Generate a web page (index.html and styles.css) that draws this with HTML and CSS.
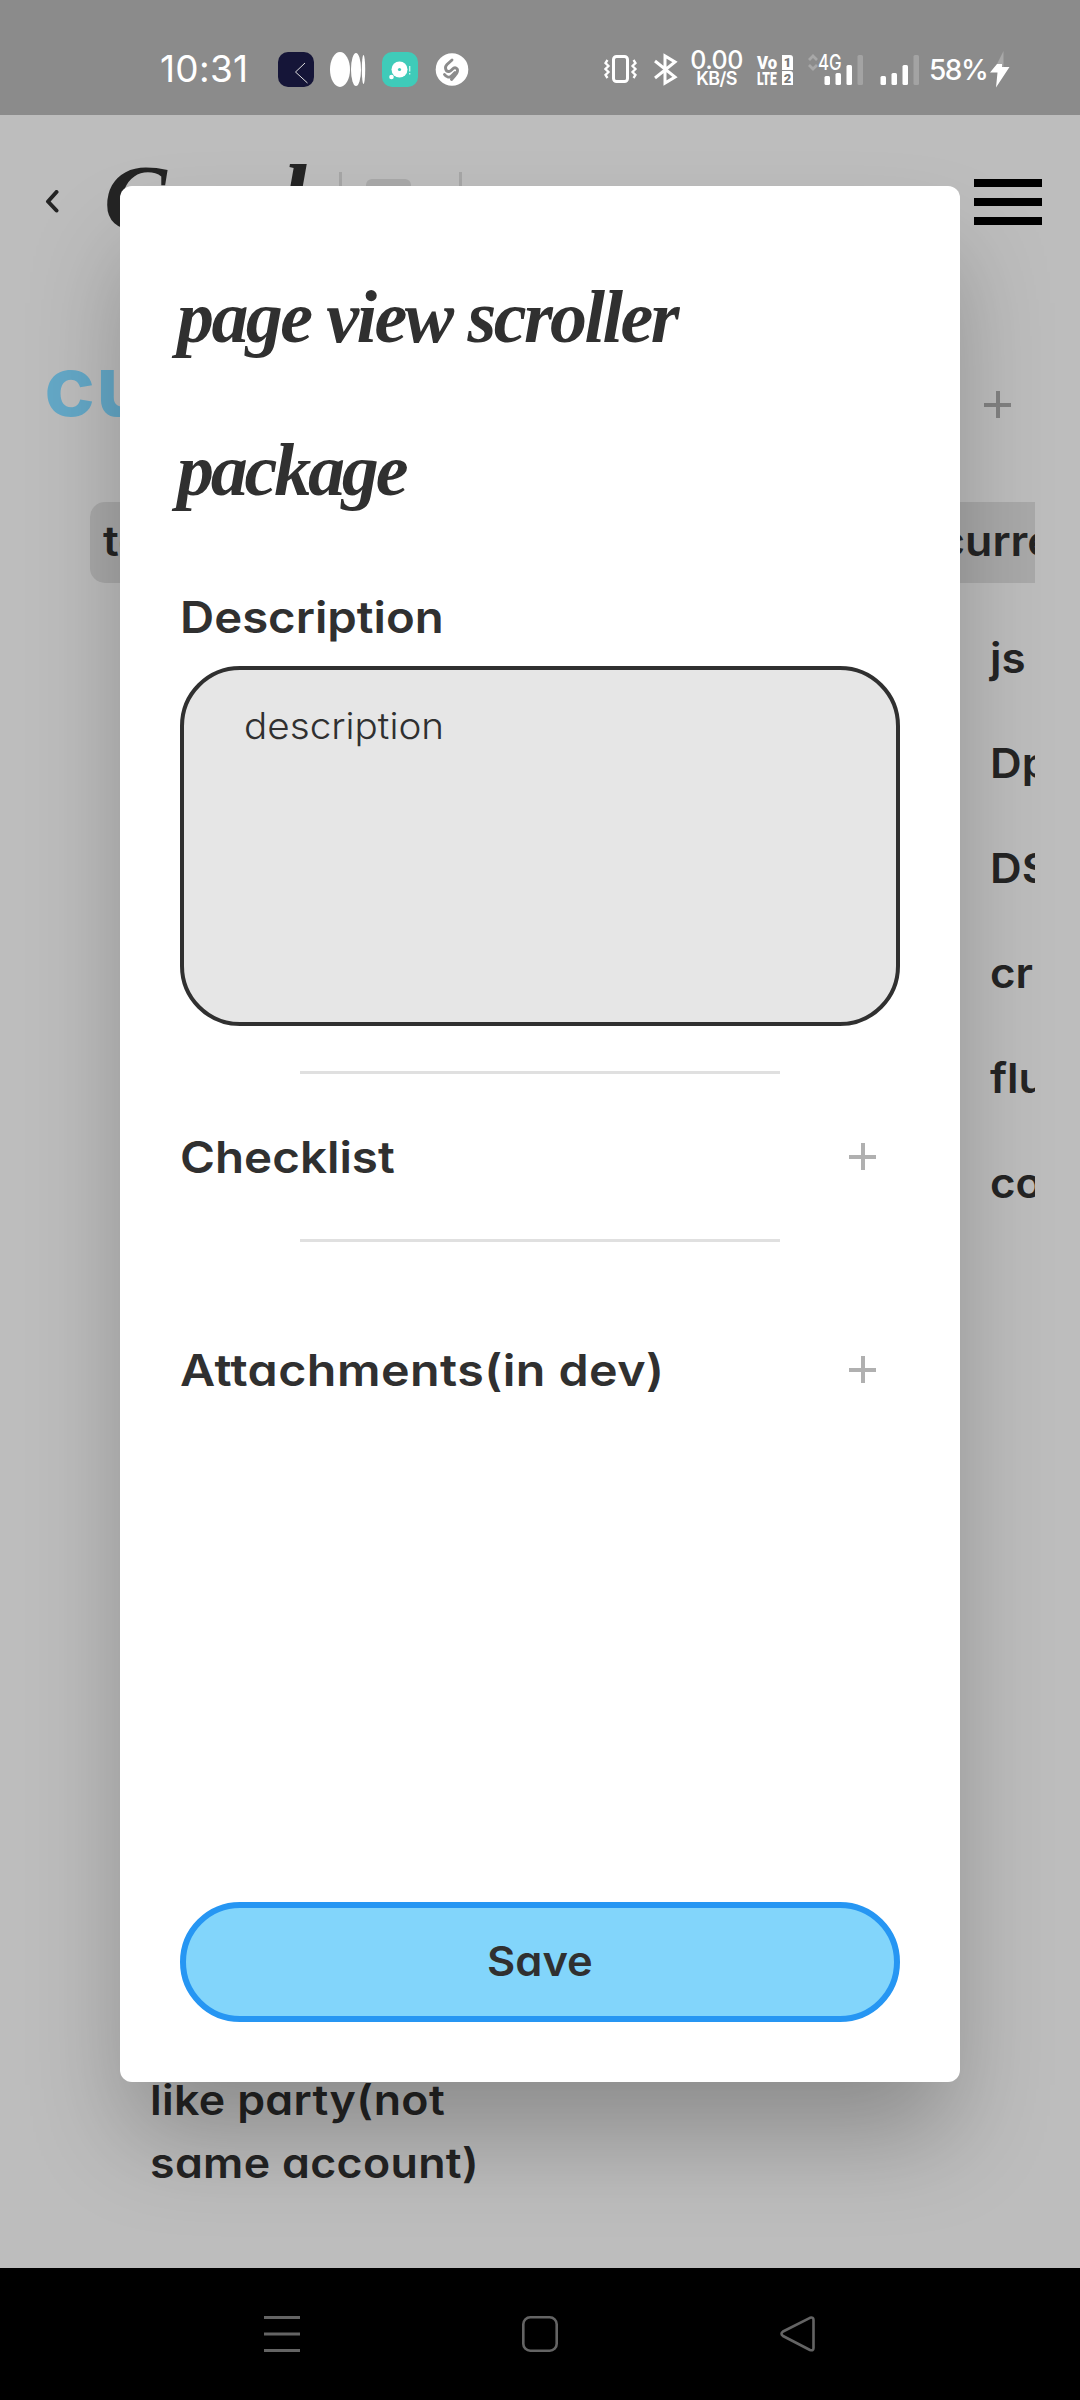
FILE: index.html
```html
<!DOCTYPE html>
<html lang="en">
<head>
<meta charset="utf-8">
<title>Card details</title>
<link rel="stylesheet" href="styles.css">
</head>
<body>
<header class="status">
  <span class="clock">10:31</span>
  <svg class="notif" width="192" height="38" viewBox="278 51 192 38">
    <rect x="278" y="52" width="36" height="35" rx="10" fill="#151538"/>
    <path d="M305 63L295.500 72L307.500 83" fill="none" stroke="#ddd" stroke-width="1"/>
    <g fill="#fff"><ellipse cx="340" cy="69.500" rx="10" ry="17.500"/><ellipse cx="356" cy="69.500" rx="5" ry="16.500"/><ellipse cx="363.500" cy="69.500" rx="1.700" ry="14.500"/></g>
    <rect x="382" y="52" width="36" height="35" rx="10" fill="#3fcbb9"/>
    <circle cx="399.500" cy="69.500" r="8" fill="#fff"/><circle cx="399.500" cy="69.500" r="1.600" fill="#3fcbb9"/><circle cx="391.500" cy="77" r="2.300" fill="#fff"/>
    <path d="M409.700 66v5.500m0 1.500v1.500" stroke="#d8f5f1" stroke-width="1.300"/>
    <circle cx="452" cy="69.500" r="16.300" fill="#fff"/>
    <path d="M452 60l-5 4.500c-3 3-1 7.500 2 7s4-5 7-3.500 1 5.500-1 7.500l-3.500 4M444.500 74.500c2 3 5 3.500 7.500 1l3-3" fill="none" stroke="#8b8b8b" stroke-width="2.900" stroke-linecap="round"/>
  </svg>
  <svg class="radios" width="74" height="38" viewBox="604 51 74 38" fill="none" stroke="#fff">
    <rect x="613.500" y="56.500" width="14" height="25" rx="3" stroke-width="3"/>
    <path d="M607.500 60l-2 3 3 3-3 3 3 3-3 3 2 3M633.500 60l2 3-3 3 3 3-3 3 3 3-2 3" stroke-width="2.300"/>
    <path d="M655 61l20 16-10 6V56l10 6-20 16" stroke-width="3"/>
  </svg>
  <div class="speed"><span class="speed-value">0.00</span><span class="speed-unit">KB/S</span></div>
  <div class="volte">
    <span>Vo</span><b>1</b><span class="lte">LTE</span><b>2</b>
  </div>
  <svg class="arrows" width="10" height="18" viewBox="0 0 10 18" fill="none" stroke="#a8a8a8" stroke-width="2.800"><path d="M1 6l4-4 4 4M1 11l4 4 4-4"/></svg>
  <div class="signal">
    <span class="net">4G</span>
    <svg width="96" height="30" viewBox="825 54 96 30">
      <g fill="#fff"><rect x="825.500" y="75" width="5.500" height="9" rx="1.500"/><rect x="836.500" y="72" width="5.500" height="12" rx="1.500"/><rect x="847.500" y="64" width="5.500" height="20" rx="1.500"/><rect x="881.500" y="75" width="5.500" height="9" rx="1.500"/><rect x="892.500" y="72" width="5.500" height="12" rx="1.500"/><rect x="903.500" y="64" width="5.500" height="20" rx="1.500"/></g>
      <g fill="#a3a3a3"><rect x="858.500" y="54" width="5.500" height="30" rx="1.500"/><rect x="914.500" y="54" width="5.500" height="30" rx="1.500"/></g>
    </svg>
  </div>
  <span class="battery">58%</span>
  <svg class="bolt" width="20" height="37" viewBox="0 0 20 37"><path d="M13.500 0L7 13l6.500 3z" fill="#a8a8a8"/><path d="M7 13L0 21.500h7.500L6 36.500 19.500 16H12V13z" fill="#fff"/></svg>
</header>

<main class="app">
  <div class="topbar">
    <svg class="back" width="14" height="24" viewBox="0 0 14 24"><path d="M11.500 2L3 11.500l8.500 9" fill="none" stroke="#242424" stroke-width="4" stroke-linecap="round" stroke-linejoin="round"/></svg>
    <div class="brand"><span>C</span><span>l</span></div>
    <i class="rule"></i><i class="box"></i><i class="rule"></i>
    <div class="menu"><i></i><i></i><i></i></div>
  </div>
  <div class="titlebar">
    <h1 class="board-title">cu</h1>
    <i class="plus plus-dark"></i>
  </div>
  <div class="board">
    <section class="column">
      <h2 class="column-name"><span class="wide">to</span></h2>
      <p class="task"><span class="wide">like party(not</span><br><span class="wide">same account)</span></p>
    </section>
    <section class="column column-current">
      <h2 class="column-name"><span class="wide">curre</span></h2>
      <ul class="tasks"><li>js</li><li>Dp</li><li>DS</li><li>cr</li><li>flu</li><li>co</li></ul>
    </section>
  </div>

  <div class="dialog">
    <h2 class="card-title"><span class="line-one">page view scroller</span><br><span class="line-two">package</span></h2>
    <h3 class="label label-description">Description</h3>
    <div class="field"><span>description</span></div>
    <hr class="divider">
    <div class="row row-checklist"><h3 class="label label-checklist">Checklist</h3><i class="plus"></i></div>
    <hr class="divider">
    <div class="row row-attachments"><h3 class="label label-attachments">Attachments(in dev)</h3><i class="plus"></i></div>
    <button class="save"><span>Save</span></button>
  </div>
</main>

<nav class="nav">
  <svg width="36" height="36" viewBox="0 0 36 36" fill="none" stroke="#646464" stroke-width="3"><path d="M0 1.500h36M0 18h36M0 34.500h36"/></svg>
  <svg width="36" height="36" viewBox="0 0 36 36" fill="none" stroke="#646464" stroke-width="2.600"><rect x="1.300" y="1.300" width="33.400" height="33.400" rx="7"/></svg>
  <svg width="36" height="36" viewBox="0 0 36 36" fill="none" stroke="#646464" stroke-width="2.600" stroke-linejoin="round"><path d="M3 15.500L30 1.800Q33.500 .8 33.500 4V32Q33.500 35.200 30 34L3 20Q0 17.700 3 15.500z"/></svg>
</nav>
</body>
</html>
```
FILE: styles.css
```css
* { box-sizing: border-box; margin: 0; padding: 0; }

body {
  width: 1080px;
  height: 2400px;
  display: flex;
  flex-direction: column;
  overflow: hidden;
  background: #000;
  color: #242424;
  font-family: Inter, "Liberation Sans", sans-serif;
  font-feature-settings: "cv11";
}
svg { display: block; flex: none; }
h1, h2, h3 { font-weight: 600; }

/* system status bar */
.status {
  height: 115px;
  padding: 24px 0 0 160px;
  display: flex;
  align-items: center;
  background: #8b8b8b;
  color: #fff;
  white-space: nowrap;
}
.clock { width: 118px; font-size: 37px; line-height: 40px; padding-bottom: 2px; letter-spacing: 0.3px; }
.notif { margin-right: 134px; }
.radios { margin-right: 12px; }
.speed { width: 53px; display: flex; flex-direction: column; align-items: center; }
.speed-value { font-size: 25px; line-height: 19px; font-weight: 500; letter-spacing: -0.5px; }
.speed-unit { font-size: 18px; line-height: 18px; font-weight: 600; letter-spacing: -0.6px; }
.volte {
  width: 36px;
  margin: 0 15px 0 14px;
  display: grid;
  grid-template-columns: 24px 11px;
  grid-template-rows: 15px 14px;
  column-gap: 1px;
  row-gap: 1px;
  font: 900 19px/15px Roboto, sans-serif;
}
.volte span { transform: scaleX(.88); transform-origin: left; }
.volte .lte { transform: scaleX(.64); }
.volte b { background: #fff; color: #777; font-size: 13px; text-align: center; border-radius: 0 3px 0 0; }
.arrows { align-self: flex-start; margin: 30px 6px 0 0; }
.signal { position: relative; width: 96px; margin-right: 9px; }
.net { position: absolute; left: -6px; top: -3px; font-size: 21px; line-height: 21px; font-weight: 500; transform: scaleX(.8); transform-origin: left; }
.battery { width: 61px; font-size: 28px; line-height: 30px; font-weight: 500; letter-spacing: -1.5px; }

/* board behind the dialog */
.app {
  position: relative;
  height: 2153px;
  overflow: hidden;
  background: #bdbdbd;
}
.topbar {
  height: 174px;
  padding: 0 38px 0 45px;
  display: flex;
  align-items: center;
}
.brand {
  width: 280px;
  padding: 0 0 10px 45px;
  display: flex;
  gap: 114px;
  font: italic 700 94px/90px "Liberation Serif", serif;
}
.rule { width: 3px; height: 60px; background: #a6a6a6; }
.box { width: 45px; height: 46px; margin: 0 48px 0 24px; border-radius: 6px; background: #a9a9a9; }
.menu { width: 68px; margin-left: auto; display: grid; gap: 11px; }
.menu i { height: 8px; background: #000; }
.titlebar {
  height: 185px;
  padding: 0 69px 0 44px;
  display: flex;
  align-items: center;
  justify-content: space-between;
}
.board-title { padding-top: 9px; font-size: 84px; line-height: 100px; font-weight: 700; color: #64a8c7; transform: scaleX(1.04); transform-origin: left; }
.plus {
  width: 27px;
  height: 27px;
  background:
    linear-gradient(#b0b0b0, #b0b0b0) center / 27px 4px no-repeat,
    linear-gradient(#b0b0b0, #b0b0b0) center / 4px 27px no-repeat;
}
.plus-dark {
  margin-top: 46px;
  background:
    linear-gradient(#828282, #828282) center / 27px 4px no-repeat,
    linear-gradient(#828282, #828282) center / 4px 27px no-repeat;
}
.board {
  height: 1693px;
  margin: 28px 45px 0 90px;
  display: flex;
  gap: 60px;
  overflow: hidden;
}
.column { flex: none; width: 780px; display: flex; flex-direction: column; justify-content: space-between; }
.column-current { justify-content: flex-start; gap: 22px; }
.column-name {
  height: 81px;
  padding-left: 13px;
  border-radius: 15px;
  background: #a9a9a9;
  font-size: 41px;
  line-height: 78px;
}
.column-current .column-name { padding-left: 9px; }
.wide { display: inline-block; transform: scaleX(1.09); transform-origin: left; }
.task { padding-left: 60px; font-size: 41px; line-height: 63px; font-weight: 600; letter-spacing: 0.3px; }
.tasks { list-style: none; padding: 1px 0 0 60px; font-size: 41px; line-height: 105px; font-weight: 600; }
.tasks li { width: 200px; transform: scaleX(1.07); transform-origin: left; }

/* card dialog */
.dialog {
  position: absolute;
  left: 120px;
  top: 71px;
  width: 840px;
  height: 1896px;
  padding: 55px 60px 60px;
  display: flex;
  flex-direction: column;
  background: #fff;
  border-radius: 12px;
  box-shadow: 0 60px 100px -10px rgba(0, 0, 0, .27);
  color: #303030;
}
.card-title {
  margin-left: -3px;
  font: italic 700 74px/153px "Liberation Serif", serif;
  height: 306px;
  white-space: nowrap;
  letter-spacing: -2.6px;
}
.line-two { letter-spacing: -3.2px; }
.label { font-size: 44px; line-height: 54px; white-space: nowrap; transform-origin: left; }
.label-description { margin-top: 43px; transform: scaleX(1.075); }
.label-checklist { transform: scaleX(1.08); }
.label-attachments { transform: scaleX(1.1); letter-spacing: 0.4px; }
.field {
  height: 360px;
  margin-top: 22px;
  padding: 33px 60px;
  border: 4px solid #303030;
  border-radius: 60px;
  background: #e6e6e6;
  font-size: 37px;
  line-height: 46px;
  font-weight: 300;
}
.field span { display: inline-block; transform: scaleX(1.045); transform-origin: left; }
.divider { flex: none; width: 480px; height: 3px; margin: 45px auto 0; border: 0; background: #e0e0e0; }
.row { height: 165px; display: flex; align-items: center; justify-content: space-between; padding-right: 24px; }
.row + .divider { margin-top: 0; }
.row-attachments { margin-top: 45px; }
.save {
  height: 120px;
  margin-top: auto;
  border: 6px solid #2696f3;
  border-radius: 60px;
  background: #82d5fb;
  color: #303030;
  font: 600 41px/50px Inter, sans-serif;
  font-feature-settings: "cv11";
  padding-bottom: 2px;
}
.save span { display: inline-block; transform: scaleX(1.06); }

/* system navigation */
.nav { height: 132px; padding: 0 264px; display: flex; align-items: center; justify-content: space-between; background: #000; }
```
